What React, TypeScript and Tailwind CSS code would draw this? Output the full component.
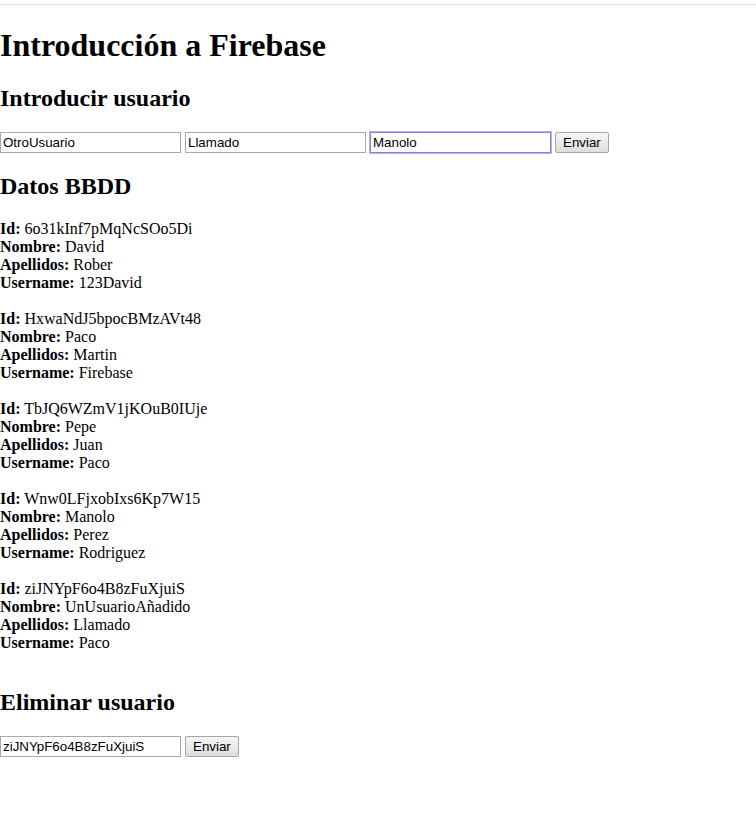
import React from 'react';

type Usuario = { id: string; nombre: string; apellidos: string; username: string };

const usuarios: Usuario[] = [
  { id: '6o31kInf7pMqNcSOo5Di', nombre: 'David', apellidos: 'Rober', username: '123David' },
  { id: 'HxwaNdJ5bpocBMzAVt48', nombre: 'Paco', apellidos: 'Martin', username: 'Firebase' },
  { id: 'TbJQ6WZmV1jKOuB0IUje', nombre: 'Pepe', apellidos: 'Juan', username: 'Paco' },
  { id: 'Wnw0LFjxobIxs6Kp7W15', nombre: 'Manolo', apellidos: 'Perez', username: 'Rodriguez' },
  { id: 'ziJNYpF6o4B8zFuXjuiS', nombre: 'UnUsuarioAñadido', apellidos: 'Llamado', username: 'Paco' },
];

const inputCls =
  "h-[21px] w-[181px] border border-[#a9a9a9] bg-white px-[2px] text-[13.33px] text-black outline-none font-['Liberation_Sans',Arial,sans-serif]";
const focusCls =
  "h-[21px] w-[181px] border border-[#8b7fe6] bg-white px-[2px] text-[13.33px] text-black outline-none shadow-[0_0_0_1px_#b7aef2] font-['Liberation_Sans',Arial,sans-serif]";
const buttonCls =
  "h-[21px] rounded-[2px] border border-[#a6a6a6] bg-gradient-to-b from-[#f6f6f6] to-[#dedede] px-[7px] text-[13.33px] text-black font-['Liberation_Sans',Arial,sans-serif]";

const UsuarioItem: React.FC<{ u: Usuario }> = ({ u }) => (
  <div className="my-[18px] leading-[18px]">
    <div><b>Id:</b> {u.id}</div>
    <div><b>Nombre:</b> {u.nombre}</div>
    <div><b>Apellidos:</b> {u.apellidos}</div>
    <div><b>Username:</b> {u.username}</div>
  </div>
);

const App: React.FC = () => {
  return (
    <div className="min-h-[824px] bg-white text-black text-[16px] font-['Liberation_Serif','Times_New_Roman',serif]">
      <div className="h-[4px]" />
      <div className="border-t border-[#dcdce4] pt-[1px]">
        <h1 className="mt-[21px] mb-[21px] text-[32px] font-bold leading-[37px]">Introducción a Firebase</h1>

        {/* Introducir */}
        <h2 className="my-[20px] text-[24px] font-bold leading-[27px]">Introducir usuario</h2>
        <div className="flex items-center gap-[4px]">
          <input className={inputCls} defaultValue="OtroUsuario" />
          <input className={inputCls} defaultValue="Llamado" />
          <input className={focusCls} defaultValue="Manolo" />
          <button className={buttonCls}>Enviar</button>
        </div>

        {/* Datos */}
        <h2 className="my-[20px] text-[24px] font-bold leading-[27px]">Datos BBDD</h2>
        <div>
          {usuarios.map(u => (
            <UsuarioItem key={u.id} u={u} />
          ))}
        </div>

        {/* Eliminar */}
        <h2 className="mt-[37px] mb-[20px] text-[24px] font-bold leading-[27px]">Eliminar usuario</h2>
        <div className="flex items-center gap-[4px]">
          <input className={inputCls} defaultValue="ziJNYpF6o4B8zFuXjuiS" />
          <button className={buttonCls}>Enviar</button>
        </div>
      </div>
    </div>
  );
};

export default App;
